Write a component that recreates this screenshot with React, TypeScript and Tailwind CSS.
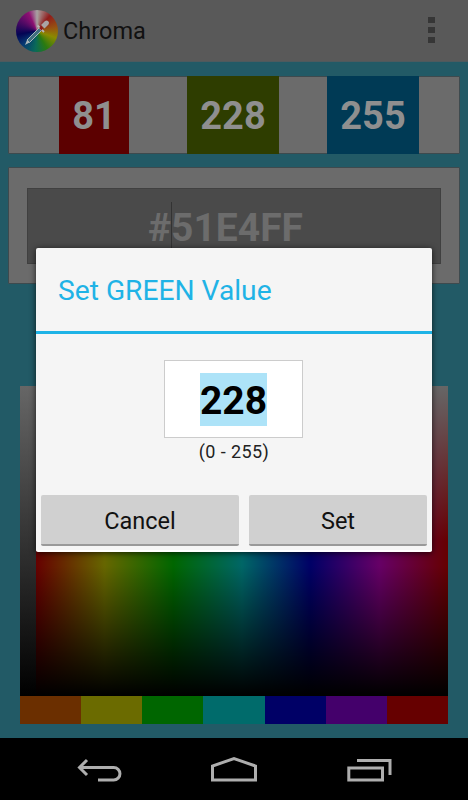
const values = [
  { label: '81', width: 'w-[70px]', bg: 'bg-[#5c0000]', gap: 'w-[58px]' },
  { label: '228', width: 'w-[92px]', bg: 'bg-[#2e3d00]', gap: 'w-[48px]' },
  { label: '255', width: 'w-[92px]', bg: 'bg-[#003a55]', gap: 'flex-1' },
];

const swatches = ['bg-[#6b2f00]', 'bg-[#6b6b00]', 'bg-[#006600]', 'bg-[#006b6b]', 'bg-[#000066]', 'bg-[#44006b]', 'bg-[#660000]'];

function Logo() {
  return (
    <div className="relative w-[42px] h-[42px] rounded-full bg-[conic-gradient(#a8a2a2_0deg,#8f1c1c_40deg,#965410_80deg,#8a8a00_110deg,#2a7a10_150deg,#0a6a58_185deg,#063a72_225deg,#040454_260deg,#500a64_300deg,#8f1072_335deg,#a8a2a2_360deg)]">
      <svg viewBox="0 0 42 42" className="absolute inset-0 w-full h-full">
        <path d="M11 30 L23 18 L25.5 20.5 L13.5 32.5 Z" fill="#3f6f80" stroke="#a9b6ba" strokeWidth="1" />
        <path d="M9 35 L11 30 L13.5 32.5 Z" fill="#a9b6ba" />
        <path d="M21.5 15.5 L28 22" stroke="#b8b8b8" strokeWidth="1.8" />
        <path d="M25 15 L29 11 A2.5 2.5 0 0 1 32.5 14.5 L28.5 18.5 Z" fill="#aaa4a4" />
        <path d="M23 18 L25 16.5 L27 18.5 L25.5 20.5 Z" fill="#8f1c1c" />
      </svg>
    </div>
  );
}

function ActionBar() {
  return (
    <div className="h-[62px] bg-[#595959] border-b border-[#4d5a5e] flex items-center pl-4 pr-[33px] shrink-0">
      <Logo />
      <span className="ml-[5px] pt-[3px] text-[23.5px] text-[#111111]">Chroma</span>
      <div className="ml-auto flex flex-col gap-1 -mt-[1px]">
        <div className="w-[7px] h-[6px] bg-[#363636]" />
        <div className="w-[7px] h-[6px] bg-[#363636]" />
        <div className="w-[7px] h-[6px] bg-[#363636]" />
      </div>
    </div>
  );
}

function ValueCard() {
  return (
    <div className="h-[78px] bg-[#6b6b6b] border border-[#3e4a4e] rounded-[1px] flex">
      <div className="w-[50px]" />
      {values.map((v) => (
        <div key={v.label} className="contents">
          <div className={`${v.width} ${v.bg} -my-px pt-[2px] flex items-center justify-center text-[38px] font-bold text-[#8f8f8f]`}>
            {v.label}
          </div>
          <div className={v.gap} />
        </div>
      ))}
    </div>
  );
}

function HexCard() {
  return (
    <div className="h-[117px] mt-[13px] bg-[#6b6b6b] border border-[#3e4a4e] rounded-[1px] px-[18px] pt-5">
      <div className="h-[76px] bg-[#4a4a4a] border border-[#404040] flex items-center justify-center pr-[17px] pt-1 text-[39px] font-bold text-[#6c6c6c]">
        #<span className="inline-block w-px h-[48px] -mr-px -mt-1 bg-[#333333]" />51E4FF
      </div>
    </div>
  );
}

function Picker() {
  return (
    <div className="mt-[102px] mx-5">
      <div className="h-[310px] flex">
        <div className="w-[16px] bg-[linear-gradient(to_bottom,#666666,#000000)]" />
        <div className="flex-1 bg-[linear-gradient(to_bottom,#666666_0%,transparent_50%,transparent_58%,#000000_100%),linear-gradient(to_right,#660000,#666600,#006600,#006666,#000066,#660066,#660000)]" />
      </div>
      <div className="h-[28px] grid grid-cols-7">
        {swatches.map((s) => (
          <div key={s} className={s} />
        ))}
      </div>
    </div>
  );
}

function NavBar() {
  return (
    <div className="h-[62px] bg-black flex items-center justify-center gap-[86px] shrink-0">
      <svg viewBox="0 0 48 30" className="w-12 h-[30px]" fill="none" stroke="#aeaeae" strokeWidth="3">
        <path d="M11 6 L3.5 13.5 L11 21" />
        <path d="M3.5 13.5 H37.7 A6.25 6.25 0 0 1 37.7 26 H22" />
      </svg>
      <svg viewBox="0 0 48 30" className="w-12 h-[30px]" fill="none" stroke="#aeaeae" strokeWidth="3">
        <path d="M2.5 26 V12 L24 4.5 L45.5 12 V26 Z" />
      </svg>
      <svg viewBox="0 0 48 30" className="w-12 h-[30px]" fill="none" stroke="#aeaeae" strokeWidth="3">
        <rect x="4.8" y="14" width="33.7" height="12" />
        <path d="M13 6.5 H46 V21" />
      </svg>
    </div>
  );
}

function SetValueDialog() {
  return (
    <div className="absolute left-9 top-[248px] w-[396px] h-[304px] bg-[#f5f5f5] border-b-2 border-white rounded-[2px] shadow-[0_1px_6px_rgba(0,0,0,0.7)] flex flex-col">
      <div className="h-[83px] flex items-center pl-[22px] pt-[3px] text-[28.2px] text-[#1fb3e6]">Set GREEN Value</div>
      <div className="h-[3px] bg-[#1fb3e6]" />
      <div className="flex flex-col items-center pt-[26px]">
        <div className="w-[139px] h-[78px] -ml-px bg-white border border-[#cccccc] flex items-center justify-center">
          <span className="h-[53px] leading-[56px] bg-[#ade3f8] text-[39px] font-bold text-black">228</span>
        </div>
        <span className="mt-[2px] text-[18px] leading-[24px] tracking-[0.4px] text-[#222222]">(0 - 255)</span>
      </div>
      <div className="mt-auto flex gap-[10px] px-[5px] pb-[4px]">
        <button className="w-[198px] h-[51px] pt-[5px] bg-[#d0d0d0] border-b-2 border-[#999999] rounded-[2px] text-[23.5px] text-[#111111]">Cancel</button>
        <button className="w-[178px] h-[51px] pt-[5px] bg-[#d0d0d0] border-b-2 border-[#999999] rounded-[2px] text-[23.5px] text-[#111111]">Set</button>
      </div>
    </div>
  );
}

export default function App() {
  return (
    <div className="relative w-[468px] h-[800px] flex flex-col overflow-hidden font-['Roboto',sans-serif]">
      <ActionBar />
      <div className="flex-1 bg-[#225a66] pt-[14px]">
        <div className="px-2">
          <ValueCard />
          <HexCard />
        </div>
        <Picker />
      </div>
      <NavBar />
      <SetValueDialog />
    </div>
  );
}
